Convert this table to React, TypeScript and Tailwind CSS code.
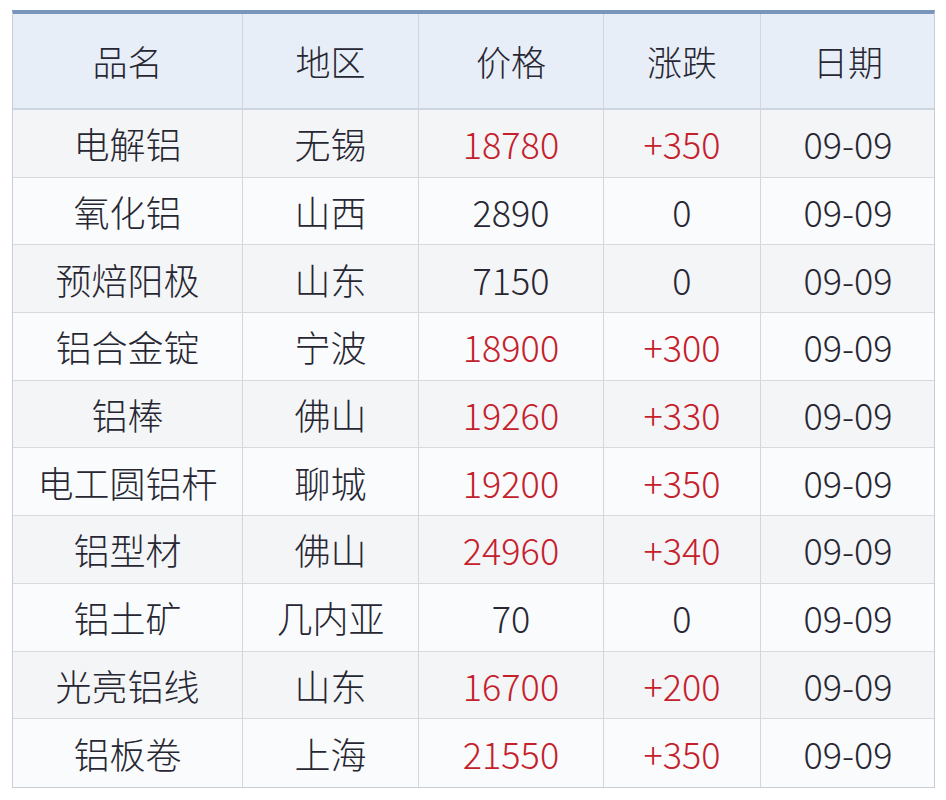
const rows = [
  { name: '电解铝', area: '无锡', price: '18780', change: '+350', date: '09-09' },
  { name: '氧化铝', area: '山西', price: '2890', change: '0', date: '09-09' },
  { name: '预焙阳极', area: '山东', price: '7150', change: '0', date: '09-09' },
  { name: '铝合金锭', area: '宁波', price: '18900', change: '+300', date: '09-09' },
  { name: '铝棒', area: '佛山', price: '19260', change: '+330', date: '09-09' },
  { name: '电工圆铝杆', area: '聊城', price: '19200', change: '+350', date: '09-09' },
  { name: '铝型材', area: '佛山', price: '24960', change: '+340', date: '09-09' },
  { name: '铝土矿', area: '几内亚', price: '70', change: '0', date: '09-09' },
  { name: '光亮铝线', area: '山东', price: '16700', change: '+200', date: '09-09' },
  { name: '铝板卷', area: '上海', price: '21550', change: '+350', date: '09-09' },
];

const headers = ['品名', '地区', '价格', '涨跌', '日期'];

const cols = 'grid grid-cols-[230px_176px_185px_157px_174px]';
const cell = 'flex items-center justify-center border-r border-[#d3d6db] last:border-r-0';

export default function App() {
  return (
    <div
      className="w-[946px] h-[800px] bg-white pt-[10px] pl-[12px]"
      style={{ fontFamily: '"Noto Sans CJK SC", "Noto Sans", sans-serif' }}
    >
      <div className="w-[923px] border-t-[4px] border-t-[#7896ba] border-x border-b border-[#c9ced6] text-[36px] font-light text-[#272733]">
        <div className={`${cols} h-[96px] bg-[#e8eef7] border-b-2 border-[#cdd5e0] text-[35px]`}>
          {headers.map((h) => (
            <div key={h} className={`${cell} border-[#d0d6de]`}>
              {h}
            </div>
          ))}
        </div>
        {rows.map((r, i) => {
          const up = r.change !== '0';
          return (
            <div
              key={r.name}
              className={`${cols} h-[67.7px] border-b border-[#d6d9de] last:border-b-0 ${
                i % 2 === 0 ? 'bg-[#f4f5f7]' : 'bg-[#fafbfc]'
              }`}
            >
              <div className={cell}>{r.name}</div>
              <div className={cell}>{r.area}</div>
              <div className={`${cell} ${up ? 'text-[#c4212c]' : ''}`}>{r.price}</div>
              <div className={`${cell} ${up ? 'text-[#c4212c]' : ''}`}>{r.change}</div>
              <div className={cell}>{r.date}</div>
            </div>
          );
        })}
      </div>
    </div>
  );
}
